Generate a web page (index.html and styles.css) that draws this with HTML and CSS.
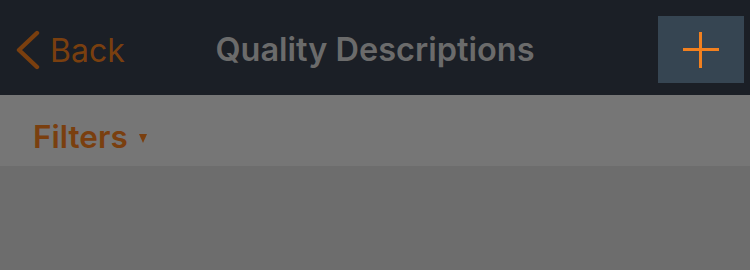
FILE: index.html
```html
<!DOCTYPE html>
<html>
<head>
<meta charset="utf-8">
<link rel="stylesheet" href="styles.css">
</head>
<body>
<header class="navbar">
  <div class="nav-left">
    <a class="back">
      <svg class="chevron" width="26" height="44" viewBox="0 0 26 44"><path d="M21 5 L3 22 L21 39" fill="none" stroke="#7a3f0f" stroke-width="4.4" stroke-linecap="round" stroke-linejoin="round"/></svg>
      <span class="back-label">Back</span>
    </a>
  </div>
  <h1 class="title">Quality Descriptions</h1>
  <div class="nav-right">
    <button class="add-btn" aria-label="Add">
      <svg width="36" height="36" viewBox="0 0 36 36"><path d="M17.5 0 V36 M0 17.5 H36" stroke="#f2801f" stroke-width="3"/></svg>
    </button>
  </div>
</header>
<div class="filterbar">
  <span class="filters">Filters</span>
  <span class="caret"></span>
</div>
<main class="content"></main>
</body>
</html>
```

FILE: styles.css
```css
* { box-sizing: border-box; }
html, body { margin: 0; padding: 0; }
body {
  width: 750px;
  height: 270px;
  background: #6d6d6d;
  font-family: Inter, "Noto Sans", sans-serif;
  overflow: hidden;
}
.navbar {
  height: 95px;
  background: #1b1f26;
  display: grid;
  grid-template-columns: 1fr auto 1fr;
  align-items: center;
}
.nav-left {
  display: flex;
  align-items: center;
  padding-left: 16px;
  padding-top: 4px;
}
.back {
  display: flex;
  align-items: center;
  gap: 8px;
  color: #7a3f0f;
}
.chevron { display: block; }
.back-label {
  font-size: 32px;
  font-weight: 400;
  line-height: 1;
  padding-top: 2px;
}
.title {
  margin: 0;
  padding-top: 6px;
  font-size: 32.5px;
  font-weight: 600;
  color: #6b6b6b;
  line-height: 1;
}
.nav-right {
  display: flex;
  justify-content: flex-end;
  padding-right: 6px;
  padding-top: 4px;
}
.add-btn {
  width: 86px;
  height: 67px;
  border: 0;
  padding: 0;
  background: #364552;
  display: flex;
  align-items: center;
  justify-content: center;
}
.add-btn svg { display: block; }
.filterbar {
  height: 71px;
  background: #767676;
  display: flex;
  align-items: center;
  padding-left: 33px;
  padding-top: 12px;
  gap: 11px;
}
.filters {
  font-size: 31.5px;
  font-weight: 600;
  color: #7a3f0f;
  line-height: 1;
}
.caret {
  width: 0;
  height: 0;
  border-left: 4.5px solid transparent;
  border-right: 4.5px solid transparent;
  border-top: 9px solid #7a3f0f;
  margin-top: 4px;
}
.content { height: 104px; background: #6d6d6d; }
```
